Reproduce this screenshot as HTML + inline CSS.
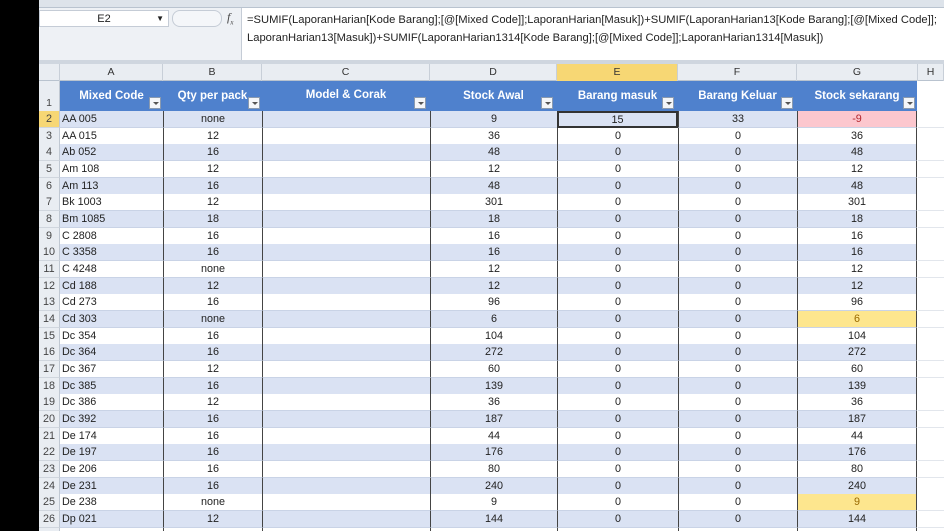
<!DOCTYPE html><html><head><style>
*{margin:0;padding:0;box-sizing:border-box}
html,body{width:944px;height:531px;overflow:hidden}
body{background:#000;font-family:"Liberation Sans",sans-serif;position:relative}
.ab{position:absolute}
#rib{left:39px;top:0;width:905px;height:8px;background:#dde3ea;border-bottom:1px solid #b9c3cf}
#fb{left:39px;top:8px;width:905px;height:56px;background:#fff;border-bottom:4px solid #cfd6df}
#nb{left:39px;top:8px;width:203px;height:52px;background:#eef1f5;border-right:1px solid #c5ccd6}
#nbox{left:39px;top:10px;width:130px;height:17px;background:#fff;border:1px solid #c5ccd6;font-size:11px;text-align:center;line-height:16px;color:#222}
#ftxt{left:247px;top:11px;font-size:11.2px;line-height:18px;color:#222;white-space:nowrap}
#colh{left:39px;top:64px;width:905px;height:17px;background:#e9edf2;border-bottom:1px solid #b9c3cf}
.ch{position:absolute;top:0;height:17px;font-size:10.5px;text-align:center;line-height:17px;color:#333;border-right:1px solid #c8cfd8}
.r{position:absolute;left:39px;width:905px;height:17px;font-size:10.8px;color:#222;line-height:16px;background:#fff}
.r div{position:absolute;top:0;height:17px;border-bottom:1px solid #c9d3e6}
.b div{background:#dae2f3}
.r .n{left:0;width:21px;background:#e9edf2!important;color:#444;text-align:center;border-right:1px solid #c0c8d2;border-bottom:1px solid #d0d6de}
.r .a{left:21px;width:103px;padding-left:2px}
.r .bb{left:124px;width:99px;text-align:center;border-left:1.5px solid #444}
.r .c{left:223px;width:168px;border-left:1.5px solid #444}
.r .d{left:391px;width:127px;text-align:center;border-left:1.5px solid #444}
.r .e{left:518px;width:121px;text-align:center;border-left:1.5px solid #444}
.r .f{left:639px;width:119px;text-align:center;border-left:1.5px solid #444}
.r .g{left:758px;width:120px;text-align:center;border-left:1.5px solid #444;border-right:1.5px solid #444}
.r .h{left:879px;width:26px;background:#fff!important;border-bottom:1px solid #e2e6ec}
#hdr{left:60px;top:81px;width:857px;height:30px;background:#4f81cd}
.hc{position:absolute;top:0;height:30px;color:#fff;font-weight:bold;font-size:11.5px;text-align:center;line-height:30px}
.fl{position:absolute;bottom:2px;width:12px;height:12px;background:#f4f6f9;border:1px solid #8a9ab0}
.fl:after{content:"";position:absolute;left:3px;top:4px;border:3px solid transparent;border-top:3px solid #555}
</style></head><body>
<div class="ab" id="rib"></div>
<div class="ab" id="fb"></div>
<div class="ab" id="nb"></div>
<div class="ab" id="nbox">E2 <span style="position:absolute;right:4px;font-size:8px">▼</span></div>
<div class="ab" style="left:172px;top:10px;width:50px;height:17px;border:1px solid #c5ccd6;border-radius:8px;background:#f4f6f9"></div>
<div class="ab" style="left:227px;top:10px;font-style:italic;font-family:'Liberation Serif',serif;font-size:12px;color:#444"><i>f</i><sub style="font-size:7px">x</sub></div>
<div class="ab" id="ftxt">=SUMIF(LaporanHarian[Kode Barang];[@[Mixed Code]];LaporanHarian[Masuk])+SUMIF(LaporanHarian13[Kode Barang];[@[Mixed Code]];<br>LaporanHarian13[Masuk])+SUMIF(LaporanHarian1314[Kode Barang];[@[Mixed Code]];LaporanHarian1314[Masuk])</div>
<div class="ab" id="colh">
<div class="ch" style="left:0;width:21px"></div>
<div class="ch" style="left:21px;width:103px">A</div>
<div class="ch" style="left:124px;width:99px">B</div>
<div class="ch" style="left:223px;width:168px">C</div>
<div class="ch" style="left:391px;width:127px">D</div>
<div class="ch" style="left:518px;width:121px;background:#f7d774">E</div>
<div class="ch" style="left:639px;width:119px">F</div>
<div class="ch" style="left:758px;width:121px">G</div>
<div class="ch" style="left:879px;width:26px">H</div>
</div>
<div class="ab" style="left:39px;top:81px;width:21px;height:30px;background:#e9edf2;border-right:1px solid #c0c8d2;font-size:10.5px;color:#444;text-align:center;line-height:44px">1</div>
<div class="ab" style="left:917px;top:81px;width:27px;height:30px;background:#fff"></div>
<div class="ab" id="hdr">
<div class="hc" style="left:0;width:103px">Mixed Code<span class="fl" style="right:2px"></span></div>
<div class="hc" style="left:103px;width:99px">Qty per pack<span class="fl" style="right:2px"></span></div>
<div class="hc" style="left:202px;width:168px;line-height:28px">Model &amp; Corak<span class="fl" style="right:4px"></span></div>
<div class="hc" style="left:370px;width:127px">Stock Awal<span class="fl" style="right:4px"></span></div>
<div class="hc" style="left:497px;width:121px">Barang masuk<span class="fl" style="right:4px"></span></div>
<div class="hc" style="left:618px;width:119px">Barang Keluar<span class="fl" style="right:4px"></span></div>
<div class="hc" style="left:737px;width:120px">Stock sekarang<span class="fl" style="right:2px"></span></div>
</div>
<div class="r b" style="top:111px"><div class="n" style="background:#f7d774!important">2</div><div class="a">AA 005</div><div class="bb">none</div><div class="c"></div><div class="d">9</div><div class="e" style="border:2px solid #333;line-height:14px">15</div><div class="f">33</div><div class="g" style="background:#fcc7ce;color:#b3262e">-9</div><div class="h"></div></div>
<div class="r" style="top:128px"><div class="n">3</div><div class="a">AA 015</div><div class="bb">12</div><div class="c"></div><div class="d">36</div><div class="e">0</div><div class="f">0</div><div class="g">36</div><div class="h"></div></div>
<div class="r b" style="top:144px"><div class="n">4</div><div class="a">Ab 052</div><div class="bb">16</div><div class="c"></div><div class="d">48</div><div class="e">0</div><div class="f">0</div><div class="g">48</div><div class="h"></div></div>
<div class="r" style="top:161px"><div class="n">5</div><div class="a">Am 108</div><div class="bb">12</div><div class="c"></div><div class="d">12</div><div class="e">0</div><div class="f">0</div><div class="g">12</div><div class="h"></div></div>
<div class="r b" style="top:178px"><div class="n">6</div><div class="a">Am 113</div><div class="bb">16</div><div class="c"></div><div class="d">48</div><div class="e">0</div><div class="f">0</div><div class="g">48</div><div class="h"></div></div>
<div class="r" style="top:194px"><div class="n">7</div><div class="a">Bk 1003</div><div class="bb">12</div><div class="c"></div><div class="d">301</div><div class="e">0</div><div class="f">0</div><div class="g">301</div><div class="h"></div></div>
<div class="r b" style="top:211px"><div class="n">8</div><div class="a">Bm 1085</div><div class="bb">18</div><div class="c"></div><div class="d">18</div><div class="e">0</div><div class="f">0</div><div class="g">18</div><div class="h"></div></div>
<div class="r" style="top:228px"><div class="n">9</div><div class="a">C 2808</div><div class="bb">16</div><div class="c"></div><div class="d">16</div><div class="e">0</div><div class="f">0</div><div class="g">16</div><div class="h"></div></div>
<div class="r b" style="top:244px"><div class="n">10</div><div class="a">C 3358</div><div class="bb">16</div><div class="c"></div><div class="d">16</div><div class="e">0</div><div class="f">0</div><div class="g">16</div><div class="h"></div></div>
<div class="r" style="top:261px"><div class="n">11</div><div class="a">C 4248</div><div class="bb">none</div><div class="c"></div><div class="d">12</div><div class="e">0</div><div class="f">0</div><div class="g">12</div><div class="h"></div></div>
<div class="r b" style="top:278px"><div class="n">12</div><div class="a">Cd 188</div><div class="bb">12</div><div class="c"></div><div class="d">12</div><div class="e">0</div><div class="f">0</div><div class="g">12</div><div class="h"></div></div>
<div class="r" style="top:294px"><div class="n">13</div><div class="a">Cd 273</div><div class="bb">16</div><div class="c"></div><div class="d">96</div><div class="e">0</div><div class="f">0</div><div class="g">96</div><div class="h"></div></div>
<div class="r b" style="top:311px"><div class="n">14</div><div class="a">Cd 303</div><div class="bb">none</div><div class="c"></div><div class="d">6</div><div class="e">0</div><div class="f">0</div><div class="g" style="background:#fde68e;color:#9a6a00">6</div><div class="h"></div></div>
<div class="r" style="top:328px"><div class="n">15</div><div class="a">Dc 354</div><div class="bb">16</div><div class="c"></div><div class="d">104</div><div class="e">0</div><div class="f">0</div><div class="g">104</div><div class="h"></div></div>
<div class="r b" style="top:344px"><div class="n">16</div><div class="a">Dc 364</div><div class="bb">16</div><div class="c"></div><div class="d">272</div><div class="e">0</div><div class="f">0</div><div class="g">272</div><div class="h"></div></div>
<div class="r" style="top:361px"><div class="n">17</div><div class="a">Dc 367</div><div class="bb">12</div><div class="c"></div><div class="d">60</div><div class="e">0</div><div class="f">0</div><div class="g">60</div><div class="h"></div></div>
<div class="r b" style="top:378px"><div class="n">18</div><div class="a">Dc 385</div><div class="bb">16</div><div class="c"></div><div class="d">139</div><div class="e">0</div><div class="f">0</div><div class="g">139</div><div class="h"></div></div>
<div class="r" style="top:394px"><div class="n">19</div><div class="a">Dc 386</div><div class="bb">12</div><div class="c"></div><div class="d">36</div><div class="e">0</div><div class="f">0</div><div class="g">36</div><div class="h"></div></div>
<div class="r b" style="top:411px"><div class="n">20</div><div class="a">Dc 392</div><div class="bb">16</div><div class="c"></div><div class="d">187</div><div class="e">0</div><div class="f">0</div><div class="g">187</div><div class="h"></div></div>
<div class="r" style="top:428px"><div class="n">21</div><div class="a">De 174</div><div class="bb">16</div><div class="c"></div><div class="d">44</div><div class="e">0</div><div class="f">0</div><div class="g">44</div><div class="h"></div></div>
<div class="r b" style="top:444px"><div class="n">22</div><div class="a">De 197</div><div class="bb">16</div><div class="c"></div><div class="d">176</div><div class="e">0</div><div class="f">0</div><div class="g">176</div><div class="h"></div></div>
<div class="r" style="top:461px"><div class="n">23</div><div class="a">De 206</div><div class="bb">16</div><div class="c"></div><div class="d">80</div><div class="e">0</div><div class="f">0</div><div class="g">80</div><div class="h"></div></div>
<div class="r b" style="top:478px"><div class="n">24</div><div class="a">De 231</div><div class="bb">16</div><div class="c"></div><div class="d">240</div><div class="e">0</div><div class="f">0</div><div class="g">240</div><div class="h"></div></div>
<div class="r" style="top:494px"><div class="n">25</div><div class="a">De 238</div><div class="bb">none</div><div class="c"></div><div class="d">9</div><div class="e">0</div><div class="f">0</div><div class="g" style="background:#fde68e;color:#9a6a00">9</div><div class="h"></div></div>
<div class="r b" style="top:511px"><div class="n">26</div><div class="a">Dp 021</div><div class="bb">12</div><div class="c"></div><div class="d">144</div><div class="e">0</div><div class="f">0</div><div class="g">144</div><div class="h"></div></div>
<div class="r" style="top:528px"><div class="n"></div><div class="a"></div><div class="bb"></div><div class="c"></div><div class="d"></div><div class="e"></div><div class="f"></div><div class="g"></div><div class="h"></div></div>
</body></html>
